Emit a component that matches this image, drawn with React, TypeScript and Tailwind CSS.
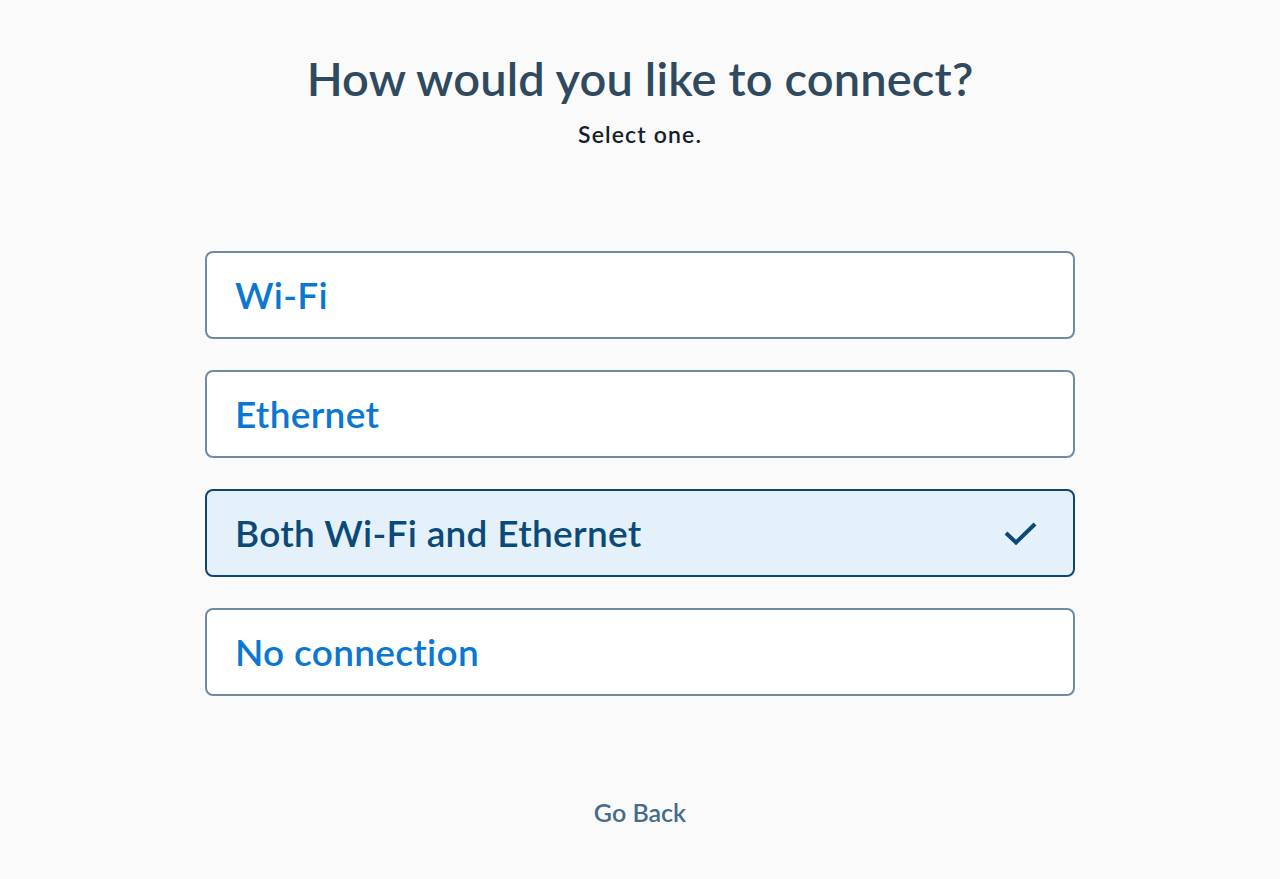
import { useState } from 'react';

const options = ['Wi-Fi', 'Ethernet', 'Both Wi-Fi and Ethernet', 'No connection'];

export default function App() {
  const [selected, setSelected] = useState('Both Wi-Fi and Ethernet');

  return (
    <div className="min-h-screen bg-[#fafafa] font-['Lato',sans-serif] flex flex-col items-center">
      <h1 className="mt-[50px] text-[47px] leading-[56px] font-semibold text-[#2f4a5f] tracking-[0.003em]">How would you like to connect?</h1>
      <p className="mt-[13px] text-[23px] leading-[30px] font-semibold text-[#16202a] tracking-[0.05em]">Select one.</p>

      <div className="mt-[102px] w-[870px] flex flex-col gap-[31px]">
        {options.map(opt => {
          const active = opt === selected;
          return (
            <button
              key={opt}
              onClick={() => setSelected(opt)}
              className={
                active
                  ? 'h-[88px] flex items-center justify-between pl-[28px] pr-[34px] rounded-[8px] border-2 border-[#0a4677] bg-[#e4f1fa] text-left'
                  : 'h-[88px] flex items-center justify-between pl-[28px] pr-[34px] rounded-[8px] border-2 border-[#6f8aa1] bg-white text-left'
              }
            >
              <span className={active ? 'text-[37px] tracking-[0.008em] font-semibold text-[#0b4a78]' : 'text-[37px] tracking-[0.008em] font-semibold text-[#0a78d2]'}>{opt}</span>
              {active && (
                <svg width="36" height="26" viewBox="0 0 36 26" fill="none">
                  <path d="M3 13 L13 22.5 L32 4" stroke="#0b4a78" strokeWidth="4" />
                </svg>
              )}
            </button>
          );
        })}
      </div>

      <button className="mt-[98px] text-[25px] font-semibold text-[#466c8c]">Go Back</button>
    </div>
  );
}
